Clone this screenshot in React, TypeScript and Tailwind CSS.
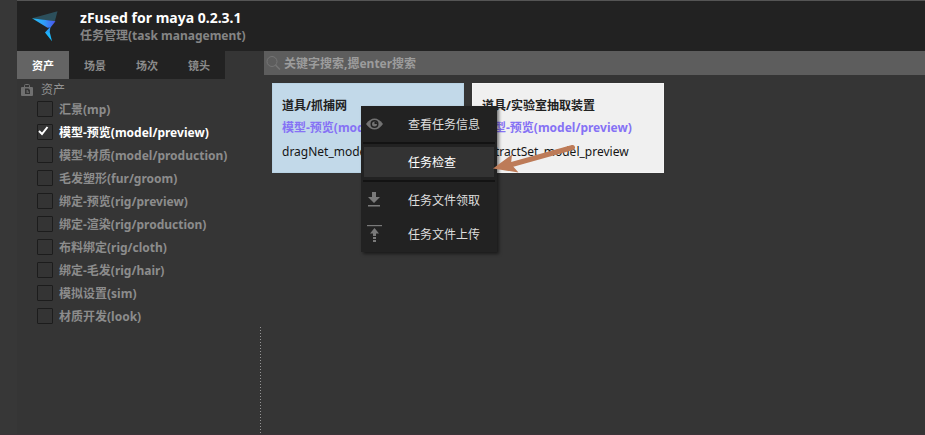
import { useState } from "react";

const TABS = ["资产", "场景", "场次", "镜头"];

const STEPS = [
  "汇景(mp)",
  "模型-预览(model/preview)",
  "模型-材质(model/production)",
  "毛发塑形(fur/groom)",
  "绑定-预览(rig/preview)",
  "绑定-渲染(rig/production)",
  "布料绑定(rig/cloth)",
  "绑定-毛发(rig/hair)",
  "模拟设置(sim)",
  "材质开发(look)",
];

function Logo() {
  return (
    <svg className="h-8 w-7 shrink-0" viewBox="0 0 28 32" aria-hidden="true">
      <defs>
        <linearGradient id="wing" x1="0" y1="0" x2="1" y2="0">
          <stop offset="0" stopColor="#22c4f8" />
          <stop offset="0.5" stopColor="#2f9df5" />
          <stop offset="1" stopColor="#4b52ee" />
        </linearGradient>
        <linearGradient id="tail" x1="0" y1="0" x2="0" y2="1">
          <stop offset="0" stopColor="#2f7ff0" />
          <stop offset="0.5" stopColor="#1fb4fb" />
          <stop offset="1" stopColor="#12c0ff" />
        </linearGradient>
      </defs>
      <path d="M0 8.300 L25.500 1.200 L22.800 11.500 Z" fill="#2c4f5b" />
      <path d="M0 8.300 L23.500 11.300 L18.500 17.500 L15.500 17.800 Z" fill="url(#wing)" />
      <path d="M18.500 16.500 L13 22.500 L20 31.200 L17.700 22 Z" fill="url(#tail)" />
    </svg>
  );
}

function BagIcon() {
  return (
    <svg className="h-3 w-3" viewBox="0 0 12 12" aria-hidden="true">
      <path d="M3.500 3 V1.500 Q3.500 .5 4.500 .5 H7.500 Q8.500 .5 8.500 1.500 V3" fill="none" stroke="#707070" />
      <rect y="3" width="12" height="9" rx="1" fill="#707070" />
      <path d="M4 4.500 H7.500 L9 6 V10 H4 Z" fill="#353535" />
      <path d="M5.500 6 H7 V7.500 H8 V9 H5.500 Z" fill="#606060" />
    </svg>
  );
}

function EyeIcon() {
  return (
    <svg className="h-3 w-[17px]" viewBox="0 0 17 12" aria-hidden="true">
      <path d="M0 6 Q4 .5 8.500 .5 T17 6 Q13 11.500 8.500 11.500 T0 6 Z" fill="#727272" />
      <circle cx="8.500" cy="6" r="4" fill="#222" />
      <circle cx="8.500" cy="6" r="2.500" fill="#727272" />
      <path d="M8.500 6 V3.500 A2.500 2.500 0 0 1 11 6 Z" fill="#222" />
    </svg>
  );
}

function DownloadIcon() {
  return (
    <svg className="h-4 w-4" viewBox="0 0 16 16" aria-hidden="true" fill="#7a7a7a">
      <path d="M6 0 H10 V5 H14 L8 11 L2 5 H6 Z" />
      <path d="M2 13 H14 V14.500 H2 Z" />
    </svg>
  );
}

function UploadIcon() {
  return (
    <svg className="h-[18px] w-4" viewBox="0 0 16 18" aria-hidden="true" fill="#7a7a7a">
      <path d="M1 0 H16 V1.200 H1 Z" />
      <path d="M8.500 3 L13 8.500 H10 V11 H7 V8.500 H4 Z" />
      <path d="M7 12 H10 V14 H7 Z M7 15 H10 V17 H7 Z" />
    </svg>
  );
}

function MenuItem({ label, icon, active = false }: { label: string; icon?: React.ReactNode; active?: boolean }) {
  return (
    <button
      type="button"
      role="menuitem"
      className={
        active
          ? "mx-[3px] my-[2px] flex h-[30px] items-center bg-[#333333] pl-[2px] text-white"
          : "flex h-[34px] items-center pl-[5px] text-[#dedede]"
      }
    >
      <span className="flex w-[42px] shrink-0">{icon}</span>
      <span className="pt-[2px]">{label}</span>
    </button>
  );
}

function MenuLine() {
  return <div role="separator" className="mx-[2px] my-px h-[2px] bg-[#131313]" />;
}

function ContextMenu() {
  return (
    <div
      role="menu"
      className="absolute top-[55px] left-[97px] flex w-[136px] flex-col bg-[#222222] py-px shadow-[2px_2px_3px_rgba(0,0,0,0.5)]"
    >
      <MenuItem label="查看任务信息" icon={<EyeIcon />} />
      <MenuLine />
      <MenuItem label="任务检查" active />
      <MenuLine />
      <MenuItem label="任务文件领取" icon={<DownloadIcon />} />
      <MenuItem label="任务文件上传" icon={<UploadIcon />} />
    </div>
  );
}

function Arrow() {
  return (
    <svg className="pointer-events-none absolute top-[92px] left-[229px] h-9 w-[84px]" viewBox="0 0 84 36" aria-hidden="true">
      <path d="M79.500 4.500 L17 22" stroke="#bd7b58" strokeWidth="5" strokeLinecap="round" />
      <path d="M0 25.500 L19 11.500 L18 21 L25.500 29.500 Z" fill="#bd7b58" />
    </svg>
  );
}

function TaskCard({ title, step, file, selected = false }: { title: string; step: string; file: string; selected?: boolean }) {
  return (
    <article
      className={
        selected
          ? "h-[90px] w-48 border border-[#b9d3e4] bg-[#c2d9e9] px-[9px] pt-[13px]"
          : "h-[90px] w-48 border border-[#f5f5f5] bg-[#f0f0f0] px-[9px] pt-[13px]"
      }
    >
      <h2 className="h-[22px] font-bold whitespace-nowrap text-[#222222]">{title}</h2>
      <p className="h-6 font-bold whitespace-nowrap text-[#8672f5]">{step}</p>
      <p className="whitespace-nowrap text-[#151515]">{file}</p>
    </article>
  );
}

export default function App() {
  const [tab, setTab] = useState("资产");
  const [checked, setChecked] = useState<string[]>([STEPS[1]]);
  const toggle = (s: string) =>
    setChecked((c) => (c.includes(s) ? c.filter((x) => x !== s) : [...c, s]));

  return (
    <div className="flex min-h-screen border-b border-[#3b3338] bg-[#353535] font-['Noto_Sans','Noto_Sans_CJK_SC',sans-serif] text-[12px] leading-[18px]">
      <div className="w-[17px] shrink-0 bg-[#373737]" />
      <div className="flex min-w-0 grow flex-col">
        <header className="flex h-[51px] shrink-0 items-center gap-5 border-t border-[#555555] bg-[#222222] pl-[15px]">
          <Logo />
          <div className="pt-px">
            <h1 className="text-[14px] font-bold text-white">zFused for maya 0.2.3.1</h1>
            <p className="font-bold text-[#858585]">任务管理(task management)</p>
          </div>
        </header>

        <div className="flex grow">
          <aside className="w-[243px] shrink-0">
            <div role="tablist" className="flex h-7 w-52 bg-[#222222]">
              {TABS.map((t) => (
                <button
                  key={t}
                  type="button"
                  role="tab"
                  aria-selected={t === tab}
                  onClick={() => setTab(t)}
                  className={
                    t === tab
                      ? "flex-1 bg-[#646464] pt-[2px] text-[11px] font-bold text-white"
                      : "flex-1 pt-[2px] text-[11px] font-bold text-[#8c8c8c]"
                  }
                >
                  {t}
                </button>
              ))}
            </div>
            <div className="flex h-[19px] items-center gap-2 pt-[2px] pl-1 text-[#929292]">
              <BagIcon />
              资产
            </div>
            <ul>
              {STEPS.map((s) => {
                const on = checked.includes(s);
                return (
                  <li key={s} className="pl-5">
                    <label
                      className={
                        on
                          ? "flex h-[23px] items-center gap-[6px] pb-px font-bold whitespace-nowrap text-white"
                          : "flex h-[23px] items-center gap-[6px] pb-px font-bold whitespace-nowrap text-[#8c8c8c]"
                      }
                    >
                      <span className="grid h-4 w-4">
                        <input
                          type="checkbox"
                          checked={on}
                          onChange={() => toggle(s)}
                          className="col-start-1 row-start-1 h-4 w-4 appearance-none rounded-[1px] border border-[#1c1c1c] bg-[#343434]"
                        />
                        {on && (
                          <svg className="pointer-events-none col-start-1 row-start-1 h-4 w-4" viewBox="0 0 16 16" fill="none" aria-hidden="true">
                            <path d="M2 7 L5 10 L10.500 3" stroke="#fff" strokeWidth="2" />
                          </svg>
                        )}
                      </span>
                      <span className="pt-px">{s}</span>
                    </label>
                  </li>
                );
              })}
            </ul>
          </aside>
          <div className="mr-[3px] h-[107px] w-px shrink-0 self-end bg-[repeating-linear-gradient(to_bottom,#959595_0_1px,transparent_1px_3px)]" />

          <main className="relative min-w-0 grow">
            <label className="flex h-6 items-center gap-[3px] bg-[#5d5d5d] pl-[2px]">
              <svg className="h-[14px] w-[15px] shrink-0" viewBox="0 0 15 14" fill="none" stroke="#757575" aria-hidden="true">
                <circle cx="6" cy="5.500" r="5" />
                <path d="M9.500 9 L14 13.500" strokeWidth="1.500" />
              </svg>
              <input
                type="text"
                aria-label="关键字搜索"
                placeholder="关键字搜索,摁enter搜索"
                className="min-w-0 grow bg-transparent pt-[2px] font-bold outline-none placeholder:text-[#9c9c9c]"
              />
            </label>
            <section className="flex flex-wrap gap-2 p-2">
              <TaskCard selected title="道具/抓捕网" step="模型-预览(model/preview)" file="dragNet_model_preview" />
              <TaskCard title="道具/实验室抽取装置" step="模型-预览(model/preview)" file="extractSet_model_preview" />
            </section>
            <ContextMenu />
            <Arrow />
          </main>
        </div>
      </div>
    </div>
  );
}
